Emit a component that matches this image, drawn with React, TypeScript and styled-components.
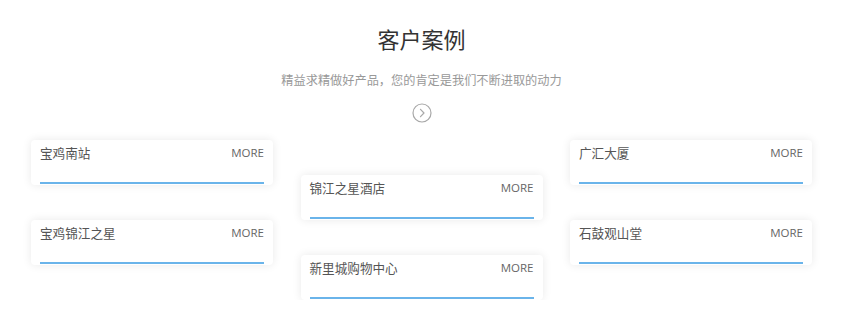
import React from 'react';
import styled, { createGlobalStyle } from 'styled-components';

const GlobalStyle = createGlobalStyle`
  body {
    margin: 0;
    background: #fff;
    font-family: "Noto Sans CJK SC", "Noto Sans", sans-serif;
  }
`;

const Section = styled.section`
  width: 843px;
  padding-top: 23px;
  display: flex;
  flex-direction: column;
  align-items: center;
`;

const Title = styled.h2`
  margin: 0;
  font-size: 22px;
  line-height: 30px;
  font-weight: 400;
  color: #333;
`;

const Subtitle = styled.p`
  margin: 17px 0 0;
  font-size: 12.2px;
  line-height: 20px;
  color: #999;
`;

const NextButton = styled.span`
  margin-top: 13px;
  width: 20px;
  height: 20px;
  display: flex;
`;

const Columns = styled.div`
  margin-top: 17px;
  display: flex;
  gap: 27.5px;
`;

const Column = styled.div<{ $offset?: number }>`
  width: 242px;
  padding-top: ${({ $offset }) => $offset ?? 0}px;
  display: flex;
  flex-direction: column;
  gap: 35px;
`;

const Card = styled.div`
  height: 45px;
  box-sizing: border-box;
  padding: 4px 9px 1px;
  background: #fff;
  border-radius: 4px;
  box-shadow: 0 0 10px rgba(0, 0, 0, 0.09);
  display: flex;
  flex-direction: column;
`;

const CardHead = styled.div`
  display: flex;
  justify-content: space-between;
  align-items: center;
  line-height: 18px;
`;

const Name = styled.span`
  font-size: 12.6px;
  color: #555;
`;

const More = styled.span`
  font-size: 11.5px;
  color: #666;
  font-family: "Open Sans", "Noto Sans", sans-serif;
`;

const Underline = styled.div`
  margin-top: auto;
  height: 2px;
  background: #6ab4ea;
`;

const columns = [
  { offset: 0, items: ['宝鸡南站', '宝鸡锦江之星'] },
  { offset: 35, items: ['锦江之星酒店', '新里城购物中心'] },
  { offset: 0, items: ['广汇大厦', '石鼓观山堂'] },
];

const App: React.FC = () => (
  <>
    <GlobalStyle />
    <Section>
      <Title>客户案例</Title>
      <Subtitle>精益求精做好产品，您的肯定是我们不断进取的动力</Subtitle>
      <NextButton>
        <svg width="20" height="20" viewBox="0 0 20 20" fill="none">
          <circle cx="10" cy="10" r="9" stroke="#a8a8a8" strokeWidth="1.2" />
          <path d="M8.5 6.3 L12 10 L8.5 13.7" stroke="#a8a8a8" strokeWidth="1.2" strokeLinecap="round" strokeLinejoin="round" />
        </svg>
      </NextButton>
      <Columns>
        {columns.map((col, i) => (
          <Column key={i} $offset={col.offset}>
            {col.items.map((name) => (
              <Card key={name}>
                <CardHead>
                  <Name>{name}</Name>
                  <More>MORE</More>
                </CardHead>
                <Underline />
              </Card>
            ))}
          </Column>
        ))}
      </Columns>
    </Section>
  </>
);

export default App;
